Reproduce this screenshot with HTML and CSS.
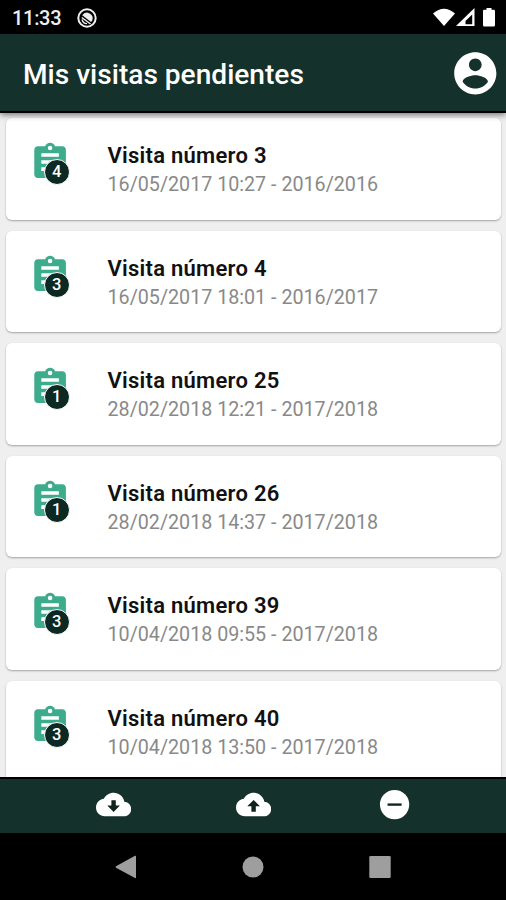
FILE: index.html
```
<!DOCTYPE html>
<html lang="es">
<head>
<meta charset="utf-8">
<title>Mis visitas pendientes</title>
<link rel="stylesheet" href="styles.css">
</head>
<body>
<svg class="defs" aria-hidden="true">
  <symbol id="clipboard" viewBox="0 0 24 24"><path d="M19 3h-4.180C14.400 1.840 13.300 1 12 1s-2.400.840-2.820 2H5c-1.100 0-2 .900-2 2v14c0 1.100.900 2 2 2h14c1.100 0 2-.900 2-2V5c0-1.100-.900-2-2-2z"/><path fill="#fff" d="M12 2.700a1.300 1.300 0 1 1 0 2.600a1.300 1.300 0 0 1 0-2.600zM14 17H7v-2h7v2zm3-4H7v-2h10v2zm0-4H7V7h10v2z"/></symbol>
  <symbol id="cloud" viewBox="0 0 24 24"><path d="M19.350 10.040C18.670 6.590 15.640 4 12 4 9.110 4 6.600 5.640 5.350 8.040 2.340 8.360 0 10.910 0 14c0 3.310 2.690 6 6 6h13c2.760 0 5-2.240 5-5 0-2.640-2.050-4.780-4.650-4.960z"/></symbol>
</svg>
<div class="phone">
  <div class="status">
    <span class="clock">11:33</span>
    <svg class="sync" viewBox="0 0 20 20"><circle cx="10" cy="10" r="8.700" fill="none" stroke="#eee" stroke-width="2"/><path d="M5.200 7.200A5.700 5.700 0 0 1 15.200 12.500L14 14z" fill="#eee"/><path d="M4.800 9.500l8.700 6.500" stroke="#eee" stroke-width="1.500"/><path d="M5 11.500q1 4 5 4.200" fill="none" stroke="#eee" stroke-width="1.300"/></svg>
    <svg class="signals" viewBox="0 0 64 20"><g fill="#fff"><path d="M0 5.500Q11 -4 22 5.500L11 18z"/><path fill-rule="evenodd" d="M41.500 0v18H23zM39.200 6.500l-6.700 6.500v3.200h6.700z"/><path d="M53.500 1.800V0h5v1.800h2.300q1.200 0 1.200 1.200v14q0 1.500-1.300 1.500h-9.400Q50 18.500 50 17V3q0-1.200 1.200-1.200z"/></g></svg>
  </div>
  <header class="appbar">
    <h1>Mis visitas pendientes</h1>
    <svg class="account" viewBox="0 0 24 24"><path d="M12 2C6.480 2 2 6.480 2 12s4.480 10 10 10 10-4.480 10-10S17.520 2 12 2zm0 3c1.660 0 3 1.340 3 3s-1.340 3-3 3-3-1.340-3-3 1.340-3 3-3zm0 14.200c-2.500 0-4.710-1.280-6-3.220.030-1.990 4-3.080 6-3.080 1.990 0 5.970 1.090 6 3.080-1.290 1.940-3.500 3.220-6 3.220z"/></svg>
  </header>
  <main class="list">
    <article class="card"><div class="icon"><svg><use href="#clipboard"/></svg><b class="badge">4</b></div><div><h2>Visita número 3</h2><p>16/05/2017 10:27 - 2016/2016</p></div></article>
    <article class="card"><div class="icon"><svg><use href="#clipboard"/></svg><b class="badge">3</b></div><div><h2>Visita número 4</h2><p>16/05/2017 18:01 - 2016/2017</p></div></article>
    <article class="card"><div class="icon"><svg><use href="#clipboard"/></svg><b class="badge">1</b></div><div><h2>Visita número 25</h2><p>28/02/2018 12:21 - 2017/2018</p></div></article>
    <article class="card"><div class="icon"><svg><use href="#clipboard"/></svg><b class="badge">1</b></div><div><h2>Visita número 26</h2><p>28/02/2018 14:37 - 2017/2018</p></div></article>
    <article class="card"><div class="icon"><svg><use href="#clipboard"/></svg><b class="badge">3</b></div><div><h2>Visita número 39</h2><p>10/04/2018 09:55 - 2017/2018</p></div></article>
    <article class="card"><div class="icon"><svg><use href="#clipboard"/></svg><b class="badge">3</b></div><div><h2>Visita número 40</h2><p>10/04/2018 13:50 - 2017/2018</p></div></article>
  </main>
  <nav class="actions">
    <svg viewBox="0 0 24 24"><use href="#cloud"/><path class="arrow" d="M10.500 9h3v3.700h2.800L12 17l-4.300-4.300h2.800z"/></svg>
    <svg viewBox="0 0 24 24"><use href="#cloud"/><path class="arrow" d="M10.500 16.800h3v-3.700h2.800L12 8.800l-4.300 4.300h2.800z"/></svg>
    <svg viewBox="0 0 24 24"><circle cx="12" cy="12" r="10"/><path class="arrow" d="M7.200 11.200h9.600v1.600H7.200z"/></svg>
  </nav>
  <div class="system">
    <svg viewBox="0 0 24 24"><path d="M22 1.500v21q0 1-1 .500L2 12.800q-1-.800 0-1.600L21 .800q1-.400 1 .700z"/></svg>
    <svg viewBox="0 0 24 24"><circle cx="12" cy="12" r="10.500"/></svg>
    <svg viewBox="0 0 24 24"><rect x="1.300" y="1" width="21.400" height="22" rx="1.300"/></svg>
  </div>
</div>
</body>
</html>
```
FILE: styles.css
```
* { box-sizing: border-box; margin: 0; }
body { font-family: Roboto, "Liberation Sans", sans-serif; background: #000; }
.defs { display: none; }
svg { display: block; flex: none; }
.phone { width: 506px; height: 900px; display: flex; flex-direction: column; overflow: hidden; }
.status { height: 34px; flex: none; display: flex; align-items: center; padding: 2px 9px 0 12px; color: #eee; }
.clock { font-size: 20px; font-weight: 500; line-height: 24px; width: 65px; letter-spacing: -0.3px; }
.sync { width: 20px; height: 20px; }
.signals { width: 64px; height: 20px; margin-left: auto; }
.appbar { height: 79px; flex: none; display: flex; align-items: center; justify-content: space-between; padding: 2px 5.500px 0 23px; background: #15312b; border-bottom: 2px solid #000; box-shadow: 0 2px 6px rgba(0, 0, 0, .5); z-index: 1; }
.appbar h1 { font-size: 28.100px; font-weight: 500; color: #fff; line-height: 34px; padding-top: 2px; }
.account { width: 50.600px; height: 50.600px; fill: #fff; }
.list { height: 664px; flex: none; overflow: hidden; background: #efefef; padding: 5.300px 5px 0 6px; }
.card { height: 101.500px; margin-bottom: 11px; display: flex; background: #fff; border-radius: 6px; box-shadow: 0 1px 2px rgba(0, 0, 0, .32); padding: 23px 0 0 22.500px; }
.icon { position: relative; width: 79px; flex: none; }
.icon svg { width: 42.200px; height: 42.200px; fill: #3dac8d; }
.badge { position: absolute; left: 15.200px; top: 18px; width: 26px; height: 26px; border-radius: 50%; background: #0c2923; border: 1px solid #fff; color: #fff; font-size: 16.500px; font-weight: 500; line-height: 24px; text-align: center; }
.card h2 { font-size: 22px; font-weight: 600; line-height: 30px; color: #111; letter-spacing: 0.260px; }
.card p { font-size: 19.700px; line-height: 28px; color: #898989; }
.actions { height: 56px; flex: none; background: #15312b; border-top: 2px solid #000; display: flex; justify-content: space-between; align-items: center; padding: 0 94px 2px 95.500px; z-index: 1; }
.actions svg { width: 35.200px; height: 35.200px; fill: #fff; }
.actions .arrow { fill: #10231f; }
.system { height: 67px; flex: none; display: flex; justify-content: space-between; align-items: center; padding: 0 114px; }
.system svg { width: 24px; height: 24px; fill: #9e9e9e; }
```
